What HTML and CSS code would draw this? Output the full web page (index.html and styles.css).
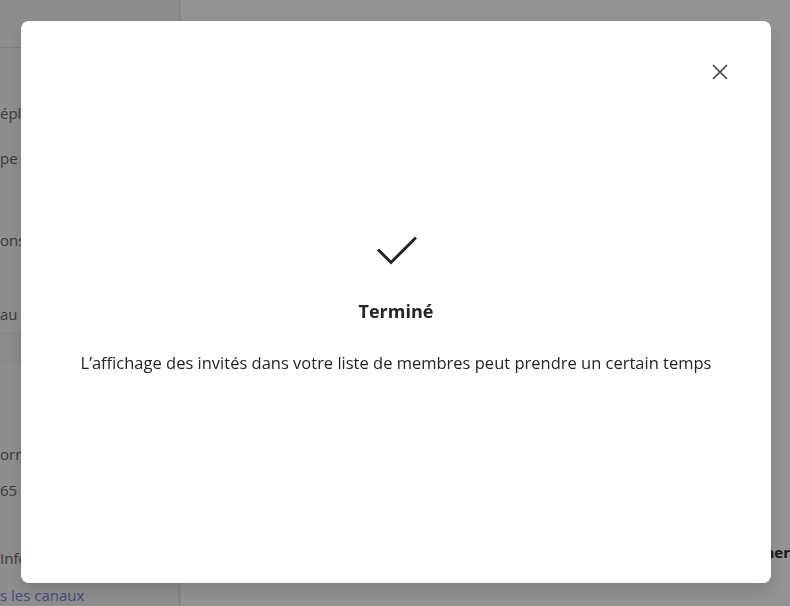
FILE: index.html
```html
<!DOCTYPE html>
<html lang="fr">
<head>
    <meta charset="UTF-8">
    <meta name="viewport" content="width=device-width, initial-scale=1.0">
    <title>Ajouter des invités</title>
    <link rel="stylesheet" href="styles.css">
</head>
<body>

<div class="page">
    <div class="sidebar">
        <div class="sidebar-top"></div>
        <div class="side-item first">éplacer l'équipe</div>
        <div class="side-item">pe de l'équipe</div>
        <div class="side-item gap">ons du membre</div>
        <div class="side-item gap2">au membre</div>
        <div class="side-band"></div>
        <div class="side-item low">ormations</div>
        <div class="side-item near">65 membres</div>
        <div class="side-item low2">Informations</div>
        <div class="side-link">s les canaux</div>
    </div>
    <div class="main">
        <div class="main-action">ner</div>
    </div>
</div>

<div class="overlay">
    <div class="dialog">
        <button class="close-button" aria-label="Fermer">
            <svg width="16" height="16" viewBox="0 0 16 16">
                <path d="M1 1L15 15M15 1L1 15" stroke="#424242" stroke-width="1.6" fill="none"/>
            </svg>
        </button>
        <div class="dialog-body">
            <svg class="check" width="42" height="30" viewBox="0 0 42 30">
                <path d="M2 13.5L15 26.5L40 1.5" stroke="#242424" stroke-width="3" fill="none" stroke-linejoin="miter"/>
            </svg>
            <div class="dialog-title">Terminé</div>
            <p class="dialog-text">L’affichage des invités dans votre liste de membres peut prendre un certain temps</p>
        </div>
    </div>
</div>

</body>
</html>
```

FILE: styles.css
```css
body {
    margin: 0;
    font-family: 'Open Sans', 'Noto Sans', sans-serif;
    color: #242424;
    overflow: hidden;
}
.page {
    display: flex;
    height: 606px;
    background-color: #f5f5f5;
}
.sidebar {
    width: 178px;
    background-color: #ededed;
    border-right: 3px solid #e2e2e2;
    display: flex;
    flex-direction: column;
    font-size: 15px;
    color: #616161;
    white-space: nowrap;
    overflow: hidden;
}
.sidebar-top {
    height: 47px;
    border-bottom: 1px solid #d6d6d6;
    flex-shrink: 0;
}
.side-item {
    margin-top: 24px;
    line-height: 21px;
}
.side-item.first {
    margin-top: 55px;
}
.side-item.gap {
    margin-top: 61px;
}
.side-item.gap2 {
    margin-top: 53px;
}
.side-band {
    margin-top: 8px;
    height: 29px;
    border-top: 1px solid #e0e0e0;
    background-color: #e8e8e8;
}
.side-item.low {
    margin-top: 81px;
}
.side-item.near {
    margin-top: 15px;
}
.side-item.low2 {
    margin-top: 47px;
}
.side-link {
    margin-top: 16px;
    line-height: 21px;
    color: #757ad8;
}
.main {
    flex: 1;
    display: flex;
    flex-direction: column;
    justify-content: flex-end;
    align-items: flex-end;
    padding-bottom: 44px;
}
.main-action {
    font-weight: 700;
    font-size: 15px;
    color: #242424;
}
.overlay {
    position: fixed;
    top: 0;
    left: 0;
    width: 100%;
    height: 100%;
    background-color: rgba(0, 0, 0, 0.4);
    display: flex;
}
.dialog {
    position: relative;
    margin: 21px 19px 23px 21px;
    flex: 1;
    background-color: #fff;
    border-radius: 8px;
    box-shadow: 0 8px 16px rgba(0, 0, 0, 0.14);
    display: flex;
    flex-direction: column;
    align-items: center;
}
.close-button {
    position: absolute;
    top: 43px;
    right: 43px;
    width: 16px;
    height: 16px;
    padding: 0;
    border: none;
    background: none;
    display: flex;
}
.dialog-body {
    margin-top: 215px;
    display: flex;
    flex-direction: column;
    align-items: center;
}
.check {
    margin-left: 2px;
}
.dialog-title {
    margin-top: 33px;
    font-size: 18px;
    font-weight: 700;
    line-height: 24px;
}
.dialog-text {
    margin: 29px 0 0;
    font-size: 16.5px;
    line-height: 22px;
}
```
